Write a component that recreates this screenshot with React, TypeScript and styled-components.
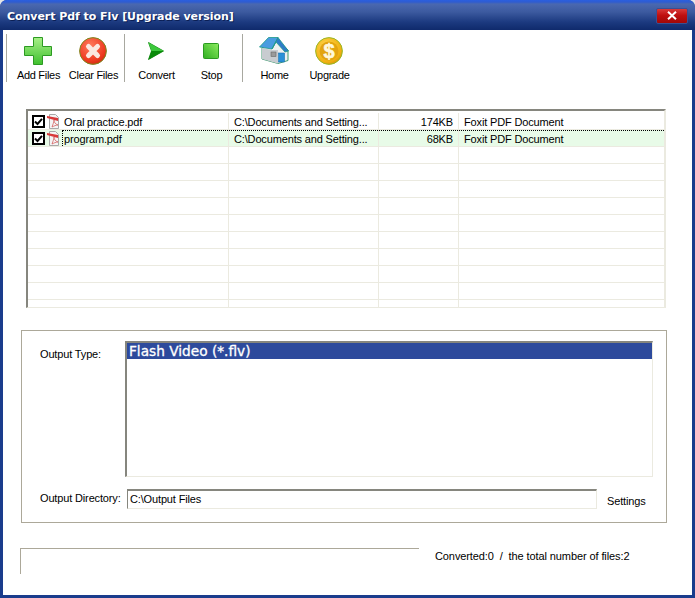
import React from 'react';
import styled, { createGlobalStyle } from 'styled-components';

const GlobalStyle = createGlobalStyle`
  html, body {
    margin: 0;
    padding: 0;
    background: #e6e6e6;
  }
  #root {
    width: 695px;
    height: 598px;
  }
`;

const Window = styled.div`
  width: 695px;
  height: 598px;
  box-sizing: border-box;
  display: flex;
  flex-direction: column;
  border-radius: 7px 7px 0 0;
  overflow: hidden;
  background: #1a3c8c;
  font-family: 'Liberation Sans', Arial, sans-serif;
  font-size: 11px;
  letter-spacing: -0.15px;
  color: #000;
`;

const TitleBar = styled.div`
  height: 30px;
  flex: none;
  display: flex;
  align-items: center;
  justify-content: space-between;
  box-sizing: border-box;
  padding: 2px 5px 0 7px;
  background: linear-gradient(#2a5fe0 0, #2f5cd0 2px, #4a68b0 4px, #3c5a9f 12px, #1c3a80 22px, #0f2a6c 30px);
`;

const Title = styled.span`
  color: #fff;
  font-family: 'DejaVu Sans', sans-serif;
  font-size: 11px;
  font-weight: bold;
  letter-spacing: -0.05px;
  padding-top: 1px;
  text-shadow: 1px 1px 0 #0b1f55;
`;

const CloseButton = styled.div`
  width: 30px;
  height: 14px;
  margin-right: 2px;
  margin-bottom: 1px;
  display: flex;
  align-items: center;
  justify-content: center;
  border: 1px solid #3a4f92;
  border-radius: 2px;
  background: linear-gradient(#d83a3a, #c01010 45%, #a00808);
`;

const Client = styled.div`
  flex: 1;
  margin: 0 3px 3px;
  background: #fff;
  display: flex;
  flex-direction: column;
`;

const Toolbar = styled.div`
  display: flex;
  height: 48px;
  margin-top: 4px;
  padding-left: 3px;
`;

const ToolGroup = styled.div`
  display: flex;
  padding: 0 3px 0 4px;
  border-left: 1px solid #a8a8a0;
`;

const ToolButton = styled.div`
  width: 55px;
  display: flex;
  flex-direction: column;
  align-items: center;
  justify-content: flex-start;
`;

const ToolIcon = styled.div`
  width: 32px;
  height: 31px;
  margin: 1px 2px 0 0;
  display: flex;
  align-items: center;
  justify-content: center;
`;

const ToolLabel = styled.span`
  margin-top: 3px;
  line-height: 13px;
  letter-spacing: -0.3px;
  white-space: nowrap;
`;

const FileList = styled.div`
  margin: 27px 0 0 23px;
  width: 640px;
  height: 199px;
  box-sizing: border-box;
  padding-top: 2px;
  border-top: 2px solid #86867e;
  border-left: 2px solid #86867e;
  border-right: 2px solid #ebeae0;
  border-bottom: 1px solid #ebeae0;
  overflow: hidden;
`;

const Row = styled.div<{ $active?: boolean }>`
  display: grid;
  grid-template-columns: 201px 150px 80px 1fr;
  height: 17px;
  box-sizing: border-box;
  border-bottom: 1px solid #ebeae0;
  background: ${(props) => (props.$active ? '#e8fbe8' : '#fff')};
`;

const Cell = styled.div<{ $right?: boolean }>`
  display: flex;
  align-items: center;
  justify-content: ${(props) => (props.$right ? 'flex-end' : 'flex-start')};
  box-sizing: border-box;
  padding: 1px 5px 0;
  border-right: 1px solid #ebeae0;
  white-space: nowrap;
  overflow: hidden;
  &:last-child {
    border-right: none;
  }
`;

const NameCell = styled(Cell)`
  padding: 1px 0 0 4px;
`;

const FileName = styled.span`
  margin-left: 2px;
  padding-left: 1px;
`;

const FocusRow = styled(Row)`
  position: relative;
  &::before {
    content: '';
    position: absolute;
    left: 34px;
    right: 0;
    top: 0;
    border-top: 1px dotted #000;
  }
  &::after {
    content: '';
    position: absolute;
    left: 34px;
    top: 0;
    bottom: 0;
    border-left: 1px dotted #000;
  }
`;

const CheckBox = styled.div`
  width: 13px;
  height: 13px;
  box-sizing: border-box;
  border: 2px solid #000;
  background: #fff;
  display: flex;
  align-items: center;
  justify-content: center;
  flex: none;
  margin-right: 2px;
`;

const OutputGroup = styled.div`
  margin: 22px 0 0 18px;
  width: 646px;
  height: 193px;
  box-sizing: border-box;
  border: 1px solid #aca899;
  padding: 10px 13px 0 18px;
  display: grid;
  grid-template-columns: 85px 1fr;
  grid-template-rows: 136px 21px;
  row-gap: 12px;
`;

const FieldLabel = styled.div<{ $top?: number }>`
  padding-top: ${(props) => props.$top ?? 0}px;
  white-space: nowrap;
  line-height: 13px;
`;

const TypeList = styled.div`
  box-sizing: border-box;
  border-top: 2px solid #86867e;
  border-left: 2px solid #86867e;
  border-right: 1px solid #ebeae0;
  border-bottom: 1px solid #ebeae0;
`;

const TypeOption = styled.div`
  height: 16px;
  background: #2d4a9c;
  color: #fff;
  font-family: 'DejaVu Sans', sans-serif;
  font-size: 13.7px;
  letter-spacing: 0;
  line-height: 17px;
  padding-left: 2px;
  white-space: nowrap;
  -webkit-text-stroke: 0.3px #fff;
`;

const DirectoryRow = styled.div`
  display: flex;
  align-items: flex-start;
`;

const DirectoryInput = styled.div`
  margin-left: 2px;
  width: 470px;
  height: 20px;
  box-sizing: border-box;
  border-top: 2px solid #86867e;
  border-left: 1px solid #86867e;
  border-right: 1px solid #ebeae0;
  border-bottom: 1px solid #ebeae0;
  padding-left: 2px;
  line-height: 16px;
  white-space: nowrap;
`;

const SettingsLink = styled.span`
  margin: 6px 0 0 10px;
  line-height: 13px;
`;

const StatusBar = styled.div`
  margin: 25px 0 0 17px;
  display: flex;
  align-items: flex-start;
`;

const ProgressBox = styled.div`
  width: 399px;
  height: 26px;
  box-sizing: border-box;
  border-top: 1px solid #aca899;
  border-left: 1px solid #aca899;
`;

const StatusText = styled.span`
  margin: 2px 0 0 16px;
  line-height: 13px;
  letter-spacing: -0.1px;
  white-space: pre;
`;

const AddIcon = () => (
  <svg width="28" height="28" viewBox="0 0 28 28">
    <defs>
      <linearGradient id="addFill" x1="0" y1="0" x2="0" y2="1">
        <stop offset="0" stopColor="#a8f088" />
        <stop offset="1" stopColor="#3fc02e" />
      </linearGradient>
    </defs>
    <path d="M9.5 .5h9v9h9v9h-9v9h-9v-9h-9v-9h9z" fill="url(#addFill)" stroke="#2c9a22" strokeWidth="1" />
  </svg>
);

const ClearIcon = () => (
  <svg width="28" height="28" viewBox="0 0 28 28">
    <defs>
      <radialGradient id="clearFill" cx="0.4" cy="0.3" r="0.8">
        <stop offset="0" stopColor="#ff7a5c" />
        <stop offset="0.7" stopColor="#ee3a20" />
        <stop offset="1" stopColor="#c02808" />
      </radialGradient>
    </defs>
    <circle cx="14" cy="14" r="13.4" fill="url(#clearFill)" stroke="#7c8a20" strokeWidth="1" />
    <path d="M9.5 9.5l9 9M18.5 9.5l-9 9" stroke="#fbe8e0" strokeWidth="5" strokeLinecap="round" />
  </svg>
);

const ConvertIcon = () => (
  <svg width="16" height="18" viewBox="0 0 16 18">
    <path d="M.5.5L15.5 9 .5 17.5 3.5 9z" fill="#18a018" stroke="#108010" strokeWidth="0.8" />
    <path d="M3.5 9H15.5L.5 17.5z" fill="#0a8a0a" />
    <path d="M3.5 9L.5.5 15.5 9z" fill="#3cc83c" />
  </svg>
);

const StopIcon = () => (
  <svg width="16" height="16" viewBox="0 0 16 16">
    <defs>
      <linearGradient id="stopFill" x1="0" y1="1" x2="1" y2="0">
        <stop offset="0" stopColor="#2fae20" />
        <stop offset="1" stopColor="#8cec60" />
      </linearGradient>
    </defs>
    <rect x="0.5" y="0.5" width="15" height="15" rx="1" fill="url(#stopFill)" stroke="#2a9a20" />
  </svg>
);

const HomeIcon = () => (
  <svg width="30" height="27" viewBox="0 0 30 27">
    <path d="M3 11v11l16 4.5 10-3V13L18 3z" fill="#eef0f0" stroke="#3f9a70" strokeWidth="1" />
    <path d="M3 11l10 2 6 0V26.5L3 22z" fill="#c8ccd0" />
    <path d="M.5 10L9.5.5H19L13 12z" fill="#4a9ce0" stroke="#1f9a88" strokeWidth=".8" />
    <path d="M19 .5L29.5 14l-3.5 1L17 5l-4 7z" fill="#2e7cc8" stroke="#1f9a88" strokeWidth=".8" />
    <rect x="12" y="15" width="5" height="4.5" fill="#9a9a9a" stroke="#666" strokeWidth="0.6" />
    <rect x="19.5" y="16" width="6" height="9" fill="#2a90d8" stroke="#1870b0" strokeWidth="0.6" />
  </svg>
);

const UpgradeIcon = () => (
  <svg width="28" height="28" viewBox="0 0 28 28">
    <defs>
      <radialGradient id="coinFill" cx="0.4" cy="0.35" r="0.75">
        <stop offset="0" stopColor="#ffd850" />
        <stop offset="0.75" stopColor="#f0b010" />
        <stop offset="1" stopColor="#c88a08" />
      </radialGradient>
    </defs>
    <circle cx="14" cy="14" r="13.4" fill="url(#coinFill)" stroke="#98b828" strokeWidth="1" />
    <circle cx="14" cy="14" r="9.5" fill="#e2a410" />
    <text x="14" y="21" textAnchor="middle" fontFamily="'Liberation Sans', sans-serif" fontSize="20" fontWeight="bold" fill="#fff8dc" stroke="#fff8dc" strokeWidth=".6">$</text>
  </svg>
);

const PdfIcon = () => (
  <svg width="14" height="15" viewBox="0 0 14 15" style={{ flex: 'none' }}>
    <path d="M2.5 .5h6l3 3v11h-9z" fill="#f4f4f4" stroke="#a8a8a8" />
    <path d="M0 2l11 2v3L0 4z" fill="#d83a3a" />
    <path d="M5 13c1-3 2-5 2-7 0 2 1 4 4 5-2 0-4 1-6 2z" fill="none" stroke="#d05050" strokeWidth=".7" />
  </svg>
);

const CheckMark = () => (
  <svg width="9" height="9" viewBox="0 0 9 9">
    <path d="M1 4.5l2.5 2.5L8 1.8" fill="none" stroke="#000" strokeWidth="2" />
  </svg>
);

const CloseGlyph = () => (
  <svg width="12" height="9" viewBox="0 0 12 9">
    <path d="M2 .8l8 7.4M10 .8L2 8.2" stroke="#fff" strokeWidth="2" />
  </svg>
);

const tools = [
  [
    { label: 'Add Files', icon: <AddIcon /> },
    { label: 'Clear Files', icon: <ClearIcon /> },
  ],
  [
    { label: 'Convert', icon: <ConvertIcon /> },
    { label: 'Stop', icon: <StopIcon /> },
  ],
  [
    { label: 'Home', icon: <HomeIcon /> },
    { label: 'Upgrade', icon: <UpgradeIcon /> },
  ],
];

const files = [
  { name: 'Oral practice.pdf', size: '174KB' },
  { name: 'program.pdf', size: '68KB' },
];

const FILE_PATH = 'C:\\Documents and Setting...';
const emptyRows = Array.from({ length: 10 });

export default function App() {
  return (
    <>
      <GlobalStyle />
      <Window>
        <TitleBar>
          <Title>Convert Pdf to Flv [Upgrade version]</Title>
          <CloseButton>
            <CloseGlyph />
          </CloseButton>
        </TitleBar>
        <Client>
          <Toolbar>
            {tools.map((group, i) => (
              <ToolGroup key={i}>
                {group.map((tool) => (
                  <ToolButton key={tool.label}>
                    <ToolIcon>{tool.icon}</ToolIcon>
                    <ToolLabel>{tool.label}</ToolLabel>
                  </ToolButton>
                ))}
              </ToolGroup>
            ))}
          </Toolbar>
          <FileList>
            {files.map((file, i) => {
              const RowKind = i === 1 ? FocusRow : Row;
              return (
                <RowKind key={file.name} $active={i === 1}>
                  <NameCell>
                    <CheckBox>
                      <CheckMark />
                    </CheckBox>
                    <PdfIcon />
                    <FileName>{file.name}</FileName>
                  </NameCell>
                  <Cell>{FILE_PATH}</Cell>
                  <Cell $right>{file.size}</Cell>
                  <Cell>Foxit PDF Document</Cell>
                </RowKind>
              );
            })}
            {emptyRows.map((_, i) => (
              <Row key={i}>
                <Cell />
                <Cell />
                <Cell />
                <Cell />
              </Row>
            ))}
          </FileList>
          <OutputGroup>
            <FieldLabel $top={7}>Output Type:</FieldLabel>
            <TypeList>
              <TypeOption>Flash Video (*.flv)</TypeOption>
            </TypeList>
            <FieldLabel $top={3}>Output Directory:</FieldLabel>
            <DirectoryRow>
              <DirectoryInput>C:\Output Files</DirectoryInput>
              <SettingsLink>Settings</SettingsLink>
            </DirectoryRow>
          </OutputGroup>
          <StatusBar>
            <ProgressBox />
            <StatusText>Converted:0  /  the total number of files:2</StatusText>
          </StatusBar>
        </Client>
      </Window>
    </>
  );
}
